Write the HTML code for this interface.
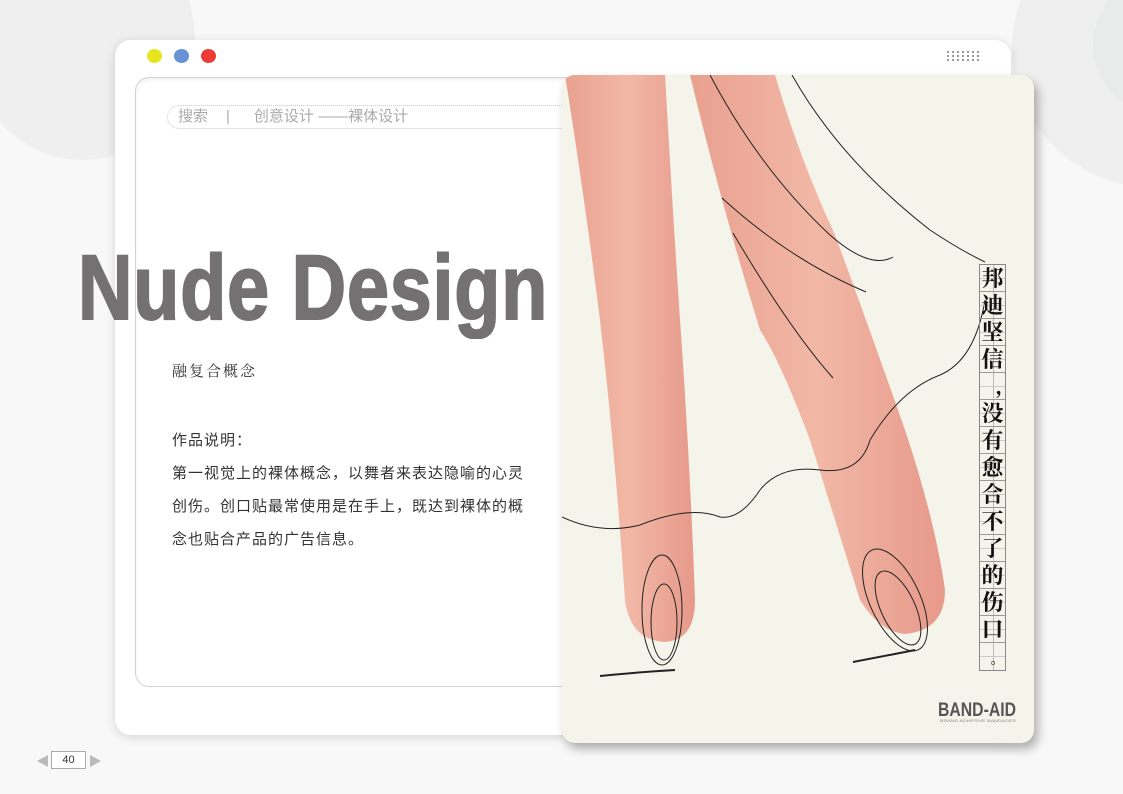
<!DOCTYPE html>
<html><head><meta charset="utf-8"><style>
*{margin:0;padding:0;box-sizing:border-box}
body{width:1123px;height:794px;overflow:hidden;background:#f8f8f8;position:relative;font-family:"Liberation Sans","Noto Sans CJK SC",sans-serif}
.abs{position:absolute}
.c1{left:-30px;top:-80px;width:225px;height:240px;border-radius:50%;background:#efefef}
.c2{left:1012px;top:-92px;width:290px;height:280px;border-radius:50%;background:#efefef}
.c3{left:1093px;top:-25px;width:140px;height:140px;border-radius:50%;background:#e9eaea}
.win{left:115px;top:40px;width:896px;height:695px;background:#fff;border-radius:16px;box-shadow:0 2px 10px rgba(0,0,0,.15)}
.dot{width:15px;height:14px;border-radius:50%;top:49px}
.inner{left:135px;top:77px;width:470px;height:610px;border:1px solid #d2d2d2;border-radius:14px;background:#fff;box-shadow:inset 0 2px 4px rgba(0,0,0,.06)}
.search{left:167px;top:105px;width:420px;height:24px;border:1px dotted #ccc;border-radius:12px;color:#aaa;font-size:15px;line-height:22px;padding-left:10px;white-space:nowrap}
.title{left:78px;top:236px;font-size:92px;font-weight:bold;color:#737171;transform-origin:0 0;transform:scaleX(0.82);white-space:nowrap;font-family:"Liberation Sans",sans-serif;letter-spacing:1px;-webkit-text-stroke:2px #737171}
.sub{left:172px;top:360px;font-size:15px;color:#333;letter-spacing:2px;font-family:"Noto Serif CJK SC",serif}
.desc{left:172px;font-size:15px;letter-spacing:1px;color:#333;width:360px}
.card{left:562px;top:75px;width:472px;height:668px;border-radius:13px;background:#f4f4ea;overflow:hidden;box-shadow:4px 6px 10px rgba(0,0,0,.3)}
.col{left:979px;top:264px;width:27px;border:1px solid #888;}
.col div{height:27px;border-bottom:1px solid #999;font-size:22px;line-height:26px;text-align:center;font-weight:bold;color:#111;font-family:"Noto Serif CJK SC",serif;background:linear-gradient(#bbb,#bbb) 13px 0/1px 100% no-repeat,linear-gradient(#ccc,#ccc) 0 13px/100% 1px no-repeat}
.col div span{position:relative}
.pg{left:51px;top:751px;width:35px;height:18px;border:1px solid #aaa;background:#fff;font-size:11px;text-align:center;line-height:16px;color:#333}
</style></head><body>
<div class="abs c1"></div><div class="abs c2"></div><div class="abs c3"></div>
<div class="abs win"></div>
<div class="abs dot" style="left:147px;background:#e6e61e"></div>
<div class="abs dot" style="left:174px;background:#6792d3"></div>
<div class="abs dot" style="left:201px;background:#ee3b37"></div>
<svg class="abs" style="left:946px;top:50px" width="36" height="12"><g fill="#999"><rect x="1" y="1" width="2" height="2"/><rect x="6" y="1" width="2" height="2"/><rect x="11" y="1" width="2" height="2"/><rect x="16" y="1" width="2" height="2"/><rect x="21" y="1" width="2" height="2"/><rect x="26" y="1" width="2" height="2"/><rect x="31" y="1" width="2" height="2"/><rect x="1" y="5" width="2" height="2"/><rect x="6" y="5" width="2" height="2"/><rect x="11" y="5" width="2" height="2"/><rect x="16" y="5" width="2" height="2"/><rect x="21" y="5" width="2" height="2"/><rect x="26" y="5" width="2" height="2"/><rect x="31" y="5" width="2" height="2"/><rect x="1" y="9" width="2" height="2"/><rect x="6" y="9" width="2" height="2"/><rect x="11" y="9" width="2" height="2"/><rect x="16" y="9" width="2" height="2"/><rect x="21" y="9" width="2" height="2"/><rect x="26" y="9" width="2" height="2"/><rect x="31" y="9" width="2" height="2"/></g></svg>
<div class="abs inner"></div>
<div class="abs search">搜索<span style="margin-left:18px">|</span><span style="margin-left:24px">创意设计 ——裸体设计</span></div>
<div class="abs title">Nude Design</div>
<div class="abs sub">融复合概念</div>
<div class="abs desc" style="top:429px">作品说明：</div>
<div class="abs desc" style="top:457px;line-height:33px">第一视觉上的裸体概念，以舞者来表达隐喻的心灵创伤。创口贴最常使用是在手上，既达到裸体的概念也贴合产品的广告信息。</div>
<div class="abs card">
<svg width="472" height="668" viewBox="562 75 472 668" style="position:absolute;left:0;top:0">
<defs><linearGradient id="f" x1="0" y1="0" x2="1" y2="0"><stop offset="0" stop-color="#e9a08f"/><stop offset=".5" stop-color="#f2b8a6"/><stop offset="1" stop-color="#e7998a"/></linearGradient></defs>
<path d="M562 75 L665 75 Q672 200 680 320 Q690 460 695 600 Q695 640 665 642 Q630 640 625 600 Q615 450 600 320 Q585 200 565 75 Z" fill="url(#f)"/>
<path d="M690 75 L775 75 Q800 160 835 235 Q870 330 905 430 Q935 520 945 590 Q945 630 905 634 Q880 632 860 600 Q835 520 810 440 Q780 360 760 330 Q720 200 690 75 Z" fill="url(#f)"/>
<g fill="none" stroke="#222" stroke-width="1">
<path d="M562 517 Q600 535 640 525 Q690 505 720 517 Q740 520 760 490 Q780 465 820 470 Q860 475 870 440 Q900 390 940 375 Q975 360 985 300"/>
<path d="M710 75 Q760 170 830 235 Q870 270 893 257"/>
<path d="M792 75 Q840 160 930 230 Q960 250 985 262"/>
<path d="M722 198 Q790 260 866 292"/>
<path d="M733 233 Q790 330 833 378"/>
<ellipse cx="662" cy="610" rx="20" ry="55"/><ellipse cx="664" cy="622" rx="13" ry="38"/>
<ellipse cx="895" cy="600" rx="25" ry="55" transform="rotate(-25 895 600)"/><ellipse cx="898" cy="608" rx="17" ry="40" transform="rotate(-25 898 608)"/>
<path d="M600 676 Q640 672 675 670" stroke-width="2"/><path d="M853 662 Q890 655 915 650" stroke-width="2"/>
</g>
<text x="938" y="716" font-family="Liberation Sans" font-weight="bold" font-size="19" fill="#555" textLength="78" lengthAdjust="spacingAndGlyphs">BAND-AID</text>
<text x="940" y="722" font-size="4" fill="#888" font-family="Liberation Sans" textLength="76" lengthAdjust="spacingAndGlyphs">BRAND ADHESIVE BANDAGES</text>
</svg>
</div>
<div class="abs col"><div>邦</div><div>迪</div><div>坚</div><div>信</div><div><span style="left:6px">,</span></div><div>没</div><div>有</div><div>愈</div><div>合</div><div>不</div><div>了</div><div>的</div><div>伤</div><div>口</div><div style="border-bottom:none"><span style="left:5px;font-size:14px">。</span></div></div>
<svg class="abs" style="left:37px;top:754px" width="64" height="14"><path d="M0 7 L11 1 L11 13Z" fill="#bbb"/><path d="M64 7 L53 1 L53 13Z" fill="#bbb"/></svg>
<div class="abs pg">40</div>
</body></html>
